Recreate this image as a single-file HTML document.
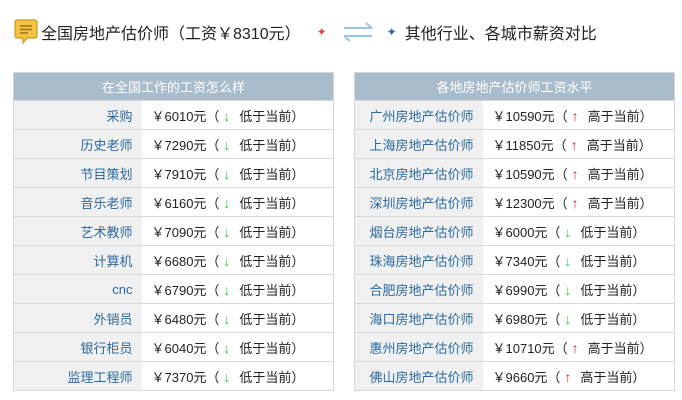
<!DOCTYPE html>
<html><head><meta charset="utf-8"><style>
*{margin:0;padding:0;box-sizing:border-box}
body{width:682px;height:400px;background:#fff;font-family:"Liberation Sans","Noto Sans CJK SC",sans-serif;position:relative;overflow:hidden}
.title{position:absolute;top:18px;left:14px;height:28px;display:flex;align-items:center;font-size:16px;color:#222;white-space:nowrap}
table{position:absolute;top:72px;width:321px;border-collapse:collapse;font-size:13px;border:1px solid #d6d6d6}
th{height:28px;background:#a9bccb;color:#fff;font-weight:normal;font-size:13px}
td{height:29px;border-top:1px solid #d8d8d8;white-space:nowrap}
td.l{background:#f0f0f0;color:#2b6aa0;text-align:right;padding-right:9px}
td.v{color:#222;padding-left:10px}
.dn,.up{display:inline-block;margin:0 9px 0 4px;font-weight:bold;font-size:14px}
.dn{color:#22cc33}
.up{color:#e02020}
</style></head><body>
<div class="title">
<svg width="24" height="28" viewBox="0 0 24 28" style="margin-right:3px"><path d="M3 2h18a2 2 0 0 1 2 2v14a2 2 0 0 1-2 2H13l-4 5v-5H3a2 2 0 0 1-2-2V4a2 2 0 0 1 2-2z" fill="#f5c342" stroke="#c89a2a" stroke-width="1.2"/><path d="M6 8h12M6 11.5h12M6 15h8" stroke="#9a7320" stroke-width="1.6"/></svg>
<span>全国房地产估价师（工资￥8310元）</span>
<span style="color:#e04a3a;font-size:12px;margin-left:16px">✦</span>
<svg width="34" height="22" viewBox="0 0 34 22" style="margin-left:14px"><path d="M3 7h28M25 2l6 5M31 15H3M9 20l-6-5" stroke="#9cc3e6" stroke-width="2" fill="none"/></svg>
<span style="color:#2a6aa8;font-size:12px;margin-left:12px">✦</span>
<span style="margin-left:8px">其他行业、各城市薪资对比</span>
</div>
<table style="left:13px"><tr><th colspan="2">在全国工作的工资怎么样</th></tr>
<tr><td class="l" style="width:128px">采购</td><td class="v">￥6010元（<span class="dn">↓</span>低于当前）</td></tr>
<tr><td class="l">历史老师</td><td class="v">￥7290元（<span class="dn">↓</span>低于当前）</td></tr>
<tr><td class="l">节目策划</td><td class="v">￥7910元（<span class="dn">↓</span>低于当前）</td></tr>
<tr><td class="l">音乐老师</td><td class="v">￥6160元（<span class="dn">↓</span>低于当前）</td></tr>
<tr><td class="l">艺术教师</td><td class="v">￥7090元（<span class="dn">↓</span>低于当前）</td></tr>
<tr><td class="l">计算机</td><td class="v">￥6680元（<span class="dn">↓</span>低于当前）</td></tr>
<tr><td class="l">cnc</td><td class="v">￥6790元（<span class="dn">↓</span>低于当前）</td></tr>
<tr><td class="l">外销员</td><td class="v">￥6480元（<span class="dn">↓</span>低于当前）</td></tr>
<tr><td class="l">银行柜员</td><td class="v">￥6040元（<span class="dn">↓</span>低于当前）</td></tr>
<tr><td class="l">监理工程师</td><td class="v">￥7370元（<span class="dn">↓</span>低于当前）</td></tr>
</table>
<table style="left:354px"><tr><th colspan="2">各地房地产估价师工资水平</th></tr>
<tr><td class="l" style="width:128px">广州房地产估价师</td><td class="v">￥10590元（<span class="up">↑</span>高于当前）</td></tr>
<tr><td class="l">上海房地产估价师</td><td class="v">￥11850元（<span class="up">↑</span>高于当前）</td></tr>
<tr><td class="l">北京房地产估价师</td><td class="v">￥10590元（<span class="up">↑</span>高于当前）</td></tr>
<tr><td class="l">深圳房地产估价师</td><td class="v">￥12300元（<span class="up">↑</span>高于当前）</td></tr>
<tr><td class="l">烟台房地产估价师</td><td class="v">￥6000元（<span class="dn">↓</span>低于当前）</td></tr>
<tr><td class="l">珠海房地产估价师</td><td class="v">￥7340元（<span class="dn">↓</span>低于当前）</td></tr>
<tr><td class="l">合肥房地产估价师</td><td class="v">￥6990元（<span class="dn">↓</span>低于当前）</td></tr>
<tr><td class="l">海口房地产估价师</td><td class="v">￥6980元（<span class="dn">↓</span>低于当前）</td></tr>
<tr><td class="l">惠州房地产估价师</td><td class="v">￥10710元（<span class="up">↑</span>高于当前）</td></tr>
<tr><td class="l">佛山房地产估价师</td><td class="v">￥9660元（<span class="up">↑</span>高于当前）</td></tr>
</table>
</body></html>
